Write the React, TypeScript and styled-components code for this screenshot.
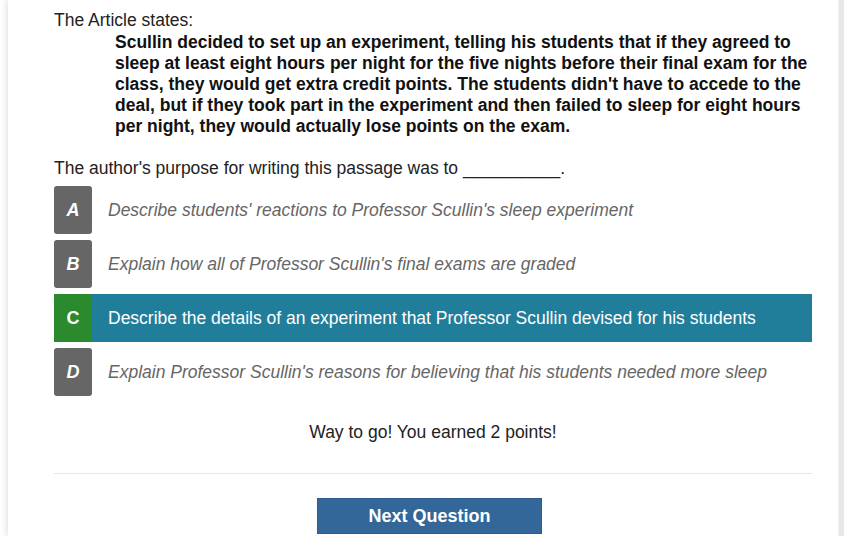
import React from "react";
import styled, { createGlobalStyle } from "styled-components";

const Global = createGlobalStyle`
  html, body { margin: 0; padding: 0; background: #ffffff; }
  body { font-family: "Liberation Sans", Arial, sans-serif; }
`;

const Page = styled.div`
  display: flex;
  width: 844px;
  height: 536px;
  overflow: hidden;
  background: #fff;
`;

const Card = styled.div`
  margin-left: 8px;
  width: 830px;
  box-sizing: border-box;
  padding: 10px 26px 0 46px;
  background: #fff;
  box-shadow: 0 0 8px rgba(0, 0, 0, 0.18);
  color: #222;
  font-size: 17.5px;
  line-height: 21px;
`;

const Gutter = styled.div`
  flex: 1;
  border-left: 1px solid #f2f2f2;
  background: #e8e8e8;
`;

const Lead = styled.div`
  margin: 0;
`;

const Quote = styled.blockquote`
  margin: 1px 0 0 61px;
  font-weight: bold;
  color: #111;
`;

const Prompt = styled.div`
  margin-top: 21px;
`;

const Options = styled.div`
  margin-top: 7px;
  display: flex;
  flex-direction: column;
  gap: 6px;
`;

const Option = styled.div<{ $selected?: boolean }>`
  display: flex;
  align-items: stretch;
  height: 48px;
  background: ${(p) => (p.$selected ? "#217e9b" : "transparent")};
`;

const Letter = styled.div<{ $correct?: boolean }>`
  width: 38px;
  flex: none;
  display: flex;
  align-items: center;
  justify-content: center;
  border-radius: ${(p) => (p.$correct ? "0" : "3px")};
  background: ${(p) => (p.$correct ? "#2b8a2e" : "#666666")};
  color: #fff;
  font-weight: bold;
  font-style: ${(p) => (p.$correct ? "normal" : "italic")};
  font-size: 18px;
`;

const OptionText = styled.div<{ $selected?: boolean }>`
  display: flex;
  align-items: center;
  padding-left: 16px;
  font-style: ${(p) => (p.$selected ? "normal" : "italic")};
  color: ${(p) => (p.$selected ? "#fff" : "#666")};
`;

const Feedback = styled.div`
  margin-top: 26px;
  text-align: center;
  color: #222;
`;

const Divider = styled.hr`
  margin: 30px 0 0 0;
  border: none;
  border-top: 1px solid #e6e6e6;
`;

const ButtonRow = styled.div`
  display: flex;
  justify-content: center;
  padding-top: 24px;
  padding-right: 7px;
`;

const NextButton = styled.button`
  width: 225px;
  height: 36px;
  border: 1px solid #2d5d8f;
  background: #336699;
  color: #fff;
  font-family: "Liberation Sans", Arial, sans-serif;
  font-weight: bold;
  font-size: 18px;
  cursor: pointer;
`;

const options = [
  { letter: "A", text: "Describe students' reactions to Professor Scullin's sleep experiment" },
  { letter: "B", text: "Explain how all of Professor Scullin's final exams are graded" },
  { letter: "C", text: "Describe the details of an experiment that Professor Scullin devised for his students", selected: true },
  { letter: "D", text: "Explain Professor Scullin's reasons for believing that his students needed more sleep" },
];

export default function App() {
  return (
    <Page>
      <Global />
      <Card>
        <Lead>The Article states:</Lead>
        <Quote>
          Scullin decided to set up an experiment, telling his students that if they agreed to sleep at least
          eight hours per night for the five nights before their final exam for the class, they would get extra
          credit points. The students didn't have to accede to the deal, but if they took part in the experiment
          and then failed to sleep for eight hours per night, they would actually lose points on the exam.
        </Quote>
        <Prompt>The author's purpose for writing this passage was to __________.</Prompt>
        <Options>
          {options.map((o) => (
            <Option key={o.letter} $selected={o.selected}>
              <Letter $correct={o.selected}>{o.letter}</Letter>
              <OptionText $selected={o.selected}>{o.text}</OptionText>
            </Option>
          ))}
        </Options>
        <Feedback>Way to go! You earned 2 points!</Feedback>
        <Divider />
        <ButtonRow>
          <NextButton>Next Question</NextButton>
        </ButtonRow>
      </Card>
      <Gutter />
    </Page>
  );
}
